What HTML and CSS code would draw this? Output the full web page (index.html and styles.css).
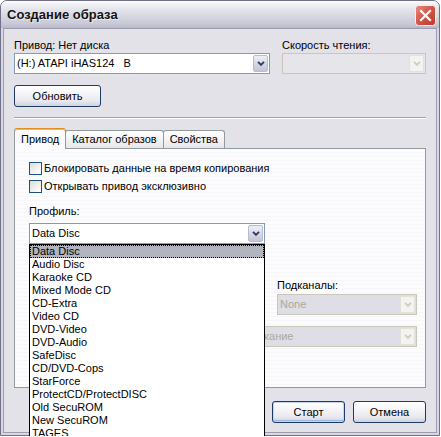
FILE: index.html
```html
<!DOCTYPE html>
<html lang="ru">
<head>
<meta charset="utf-8">
<title>Создание образа</title>
<link rel="stylesheet" href="styles.css">
</head>
<body>
<div class="window">
  <div class="titlebar">
    <span class="title">Создание образа</span>
    <span class="close">
      <svg width="21" height="21" viewBox="0 0 21 21">
        <defs>
          <linearGradient id="cg" x1="0" y1="0" x2="1" y2="1">
            <stop offset="0" stop-color="#ec8f82"/>
            <stop offset="0.45" stop-color="#d5584a"/>
            <stop offset="1" stop-color="#b8372c"/>
          </linearGradient>
        </defs>
        <rect x="0.5" y="0.5" width="20" height="20" rx="3" fill="url(#cg)" stroke="#f4f0f0"/>
        <path d="M6 6 L15 15 M15 6 L6 15" stroke="#fff" stroke-width="2.2" stroke-linecap="square"/>
      </svg>
    </span>
  </div>
  <div class="client">
    <div class="top-grid">
      <div class="field">
        <div class="label">Привод: Нет диска</div>
        <div class="combo">
          <span class="combo-text">(H:) ATAPI iHAS124   B</span>
          <span class="combo-btn"><svg width="8" height="5" viewBox="0 0 8 5"><path d="M1 0.8 L4 3.8 L7 0.8" fill="none" stroke="#303a58" stroke-width="1.9"/></svg></span>
        </div>
      </div>
      <div class="field">
        <div class="label">Скорость чтения:</div>
        <div class="combo disabled">
          <span class="combo-text"></span>
          <span class="combo-btn"><svg width="8" height="5" viewBox="0 0 8 5"><path d="M1 0.8 L4 3.8 L7 0.8" fill="none" stroke="#cfcdc2" stroke-width="1.9"/></svg></span>
        </div>
      </div>
    </div>
    <div class="btn refresh">Обновить</div>
    <div class="separator"></div>
    <div class="tabs">
      <div class="tab active">Привод</div>
      <div class="tab">Каталог образов</div>
      <div class="tab">Свойства</div>
    </div>
    <div class="panel">
      <div class="check-row"><span class="checkbox"></span><span class="check-label">Блокировать данные на время копирования</span></div>
      <div class="check-row"><span class="checkbox"></span><span class="check-label">Открывать привод эксклюзивно</span></div>
      <div class="cols">
        <div class="profile">
          <div class="label">Профиль:</div>
          <div class="combo-wrap">
            <div class="combo">
              <span class="combo-text">Data Disc</span>
              <span class="combo-btn"><svg width="8" height="5" viewBox="0 0 8 5"><path d="M1 0.8 L4 3.8 L7 0.8" fill="none" stroke="#303a58" stroke-width="1.9"/></svg></span>
            </div>
            <ul class="list">
              <li class="selected">Data Disc</li>
              <li>Audio Disc</li>
              <li>Karaoke CD</li>
              <li>Mixed Mode CD</li>
              <li>CD-Extra</li>
              <li>Video CD</li>
              <li>DVD-Video</li>
              <li>DVD-Audio</li>
              <li>SafeDisc</li>
              <li>CD/DVD-Cops</li>
              <li>StarForce</li>
              <li>ProtectCD/ProtectDISC</li>
              <li>Old SecuROM</li>
              <li>New SecuROM</li>
              <li>TAGES</li>
            </ul>
          </div>
        </div>
        <div class="subch">
          <div class="label">Подканалы:</div>
          <div class="combo disabled inpanel">
            <span class="combo-text">None</span>
            <span class="combo-btn"><svg width="8" height="5" viewBox="0 0 8 5"><path d="M1 0.8 L4 3.8 L7 0.8" fill="none" stroke="#cfcdc2" stroke-width="1.9"/></svg></span>
          </div>
        </div>
        <div class="wide">
          <div class="combo disabled inpanel">
            <span class="combo-text">Пропускание</span>
            <span class="combo-btn"><svg width="8" height="5" viewBox="0 0 8 5"><path d="M1 0.8 L4 3.8 L7 0.8" fill="none" stroke="#cfcdc2" stroke-width="1.9"/></svg></span>
          </div>
        </div>
      </div>
    </div>
    <div class="actions">
      <div class="btn default">Старт</div>
      <div class="btn">Отмена</div>
    </div>
  </div>
</div>
</body>
</html>
```

FILE: styles.css
```css
html, body {
  margin: 0;
  padding: 0;
  overflow: hidden;
  background: #ffffff;
}

body {
  font-family: "Liberation Sans", Arial, sans-serif;
  font-size: 11px;
  line-height: 13px;
  color: #000;
}

.window {
  width: 440px;
  height: 436px;
  box-sizing: border-box;
  border: 1px solid #707088;
  border-radius: 7px 7px 0 0;
  background: #d8d8e4;
  padding: 0 2px 2px;
  display: flex;
  flex-direction: column;
}

.titlebar {
  height: 27px;
  margin: 0 -2px;
  padding: 0 3px 0 6px;
  border-radius: 6px 6px 0 0;
  background: linear-gradient(to bottom, #ffffff 0%, #f2f2f6 10%, #e2e2ea 35%, #d6d6e1 60%, #c8c8d6 85%, #b8b8ca 100%);
  display: flex;
  align-items: center;
  justify-content: space-between;
}

.title {
  font-weight: bold;
  font-size: 13px;
  color: #141414;
  text-shadow: 1px 1px 0 rgba(255, 255, 255, 0.6);
}

.close {
  width: 21px;
  height: 21px;
  display: block;
  margin-top: 2px;
}

.close svg {
  display: block;
}

.client {
  flex: 1;
  border: 1px solid #9c9cb0;
  background: #e3e2e8;
  padding: 10px 10px 8px;
  display: flex;
  flex-direction: column;
}

.top-grid {
  display: grid;
  grid-template-columns: 256px 144px;
  column-gap: 12px;
}

.label {
  height: 13px;
  white-space: nowrap;
}

.field .combo {
  margin-top: 1px;
}

.combo {
  height: 21px;
  box-sizing: border-box;
  border: 1px solid #7f9db9;
  background: #ffffff;
  display: flex;
  align-items: stretch;
}

.combo-text {
  flex: 1;
  padding-left: 2px;
  line-height: 19px;
  white-space: pre;
  overflow: hidden;
}

.combo-btn {
  width: 15px;
  margin: 1px;
  box-sizing: border-box;
  border: 1px solid #b9bccf;
  border-radius: 2px;
  background: linear-gradient(to bottom, #eef0f7 0%, #d6d8e6 50%, #c2c5d7 100%);
  display: flex;
  align-items: center;
  justify-content: center;
}

.combo.disabled {
  border-color: #c9c7ba;
  background: #e6e5ea;
  color: #aca899;
}

.combo.disabled .combo-btn {
  border-color: #e4e2d8;
  background: #f3f3f1;
}

.combo.inpanel {
  background: #dfdee6;
}

.btn {
  height: 22px;
  box-sizing: border-box;
  border: 1px solid #1e3b66;
  border-radius: 3px;
  background: linear-gradient(to bottom, #ffffff 0%, #f6f6f9 35%, #e8e8ef 75%, #d2d2de 100%);
  display: flex;
  align-items: center;
  justify-content: center;
  white-space: nowrap;
}

.refresh {
  width: 87px;
  margin-top: 11px;
}

.separator {
  margin-top: 10px;
  border-top: 1px solid #a3a2ab;
  border-bottom: 1px solid #ffffff;
}

.tabs {
  margin-top: 9px;
  height: 20px;
  display: flex;
  align-items: flex-end;
  position: relative;
  z-index: 1;
}

.tab {
  height: 18px;
  box-sizing: border-box;
  padding: 0 6px;
  border: 1px solid #919b9c;
  border-bottom: none;
  border-radius: 3px 3px 0 0;
  background: linear-gradient(to bottom, #ffffff 0%, #f3f3f6 50%, #e6e6ec 100%);
  display: flex;
  align-items: center;
  margin-left: -1px;
}

.tab.active {
  height: 21px;
  margin-bottom: -1px;
  margin-left: 0;
  padding: 0 6px 0 6px;
  background: #fcfcfe;
  border-top: 1px solid #e08b1e;
  box-shadow: inset 0 1px 0 #f9b74a;
  position: relative;
  z-index: 2;
  margin-right: 0;
}

.panel {
  height: 240px;
  box-sizing: border-box;
  border: 1px solid #919b9c;
  background: repeating-linear-gradient(to bottom, #fcfcfe 0, #fcfcfe 3px, #f7f7f9 3px, #f7f7f9 4px);
  padding: 13px 8px 0 14px;
  display: flex;
  flex-direction: column;
  gap: 5px;
}

.check-row {
  display: flex;
  align-items: center;
  height: 13px;
}

.checkbox {
  width: 13px;
  height: 13px;
  box-sizing: border-box;
  border: 1px solid #1c5180;
  background: linear-gradient(135deg, #dcdcd7 0%, #f2f2f0 60%, #ffffff 100%);
}

.check-label {
  margin-left: 2px;
  white-space: nowrap;
}

.cols {
  display: grid;
  grid-template-columns: 236px 140px;
  column-gap: 12px;
  margin-top: 7px;
}

.profile {
  grid-column: 1;
  grid-row: 1;
}

.combo-wrap {
  position: relative;
  margin-top: 5px;
}

.list {
  position: absolute;
  top: 100%;
  left: 0;
  right: 0;
  margin: 0;
  padding: 0;
  list-style: none;
  border: 1px solid #000;
  background: #ffffff;
  z-index: 10;
}

.list li {
  height: 13px;
  line-height: 13px;
  padding-left: 2px;
  white-space: nowrap;
}

.list li.selected {
  background: #b2b4bf;
  outline: 1px dotted #000;
  outline-offset: -1px;
}

.subch {
  grid-column: 2;
  grid-row: 2;
  margin-top: 35px;
}

.subch .combo {
  margin-top: 2px;
}

.wide {
  grid-column: 1 / 3;
  grid-row: 3;
  margin: 11px 0 0 195px;
}

.actions {
  margin-top: 13px;
  display: flex;
  justify-content: flex-end;
  gap: 8px;
}

.actions .btn {
  width: 73px;
}

.btn.default {
  box-shadow: inset 0 0 0 1px #c4d4f2, inset 0 -1px 0 1px #9db7e8;
}
```
